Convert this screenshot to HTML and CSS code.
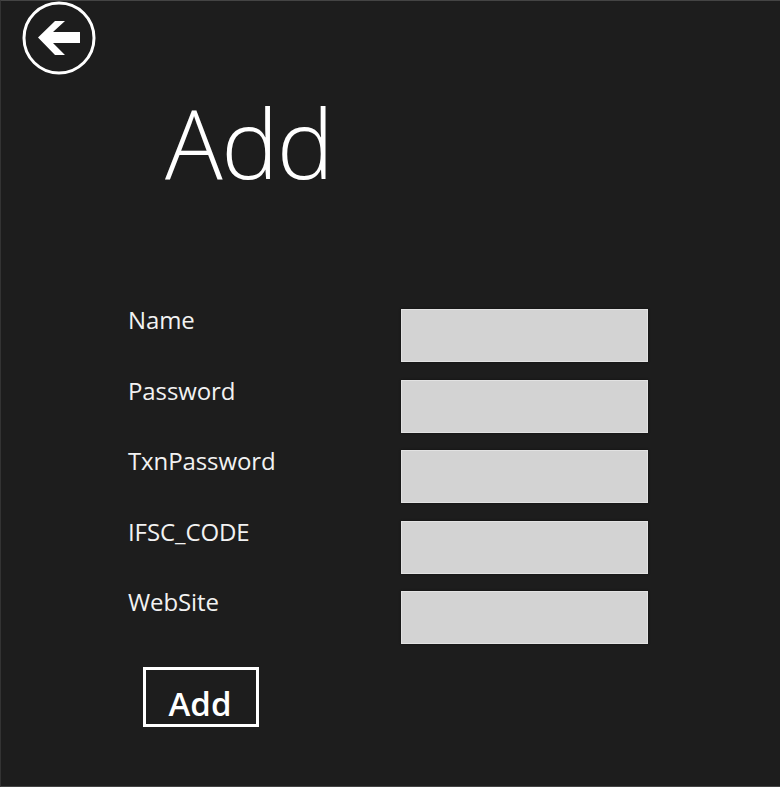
FILE: index.html
```html
<!DOCTYPE html>
<html lang="en">
<head>
  <meta charset="UTF-8">
  <meta name="viewport" content="width=device-width, initial-scale=1.0">
  <title>Add</title>
  <link rel="stylesheet" href="styles.css">
</head>
<body>
  <div class="page">
    <!-- Back button -->
    <button type="button" class="back-button" aria-label="Back">
      <svg class="back-icon" viewBox="0 0 74 74" width="74" height="74">
        <circle cx="37" cy="37" r="35" fill="none" stroke="#fff" stroke-width="3"/>
        <path d="M16 36.5 L33 20 H43 L31 31 H58 V42 H31 L43 54 H33 Z" fill="#fff"/>
      </svg>
    </button>

    <h1 class="page-title">Add</h1>

    <form class="add-form">
      <div class="form-row">
        <label for="name" class="form-label">Name</label>
        <input type="text" id="name" class="form-input">
      </div>
      <div class="form-row">
        <label for="password" class="form-label">Password</label>
        <input type="text" id="password" class="form-input">
      </div>
      <div class="form-row">
        <label for="txnPassword" class="form-label">TxnPassword</label>
        <input type="text" id="txnPassword" class="form-input">
      </div>
      <div class="form-row">
        <label for="ifscCode" class="form-label">IFSC_CODE</label>
        <input type="text" id="ifscCode" class="form-input">
      </div>
      <div class="form-row">
        <label for="website" class="form-label">WebSite</label>
        <input type="text" id="website" class="form-input">
      </div>
      <button type="submit" class="submit-button">Add</button>
    </form>
  </div>
</body>
</html>
```

FILE: styles.css
```css
* {
  margin: 0;
  padding: 0;
  box-sizing: border-box;
  font-family: "Open Sans", "Noto Sans", sans-serif;
}

html, body {
  height: 100%;
}

body {
  background-color: #1d1d1d;
  color: white;
  overflow: hidden;
}

.page {
  height: 787px;
  padding: 0 0 0 21px;
  border-top: 1px solid #444;
  border-left: 1px solid #333;
  border-bottom: 1px solid #444;
}

.back-button {
  display: block;
  width: 74px;
  height: 74px;
  background: none;
  border: none;
}

.back-icon {
  display: block;
}

.page-title {
  margin: 14px 0 0 143px;
  font-size: 96px;
  font-weight: 300;
  line-height: 106px;
  letter-spacing: -1.5px;
}

.add-form {
  margin: 112px 0 0 106px;
}

.form-row {
  display: flex;
  align-items: flex-start;
  height: 70.5px;
}

.form-label {
  width: 273px;
  padding-top: 1px;
  color: #f2f2f2;
  font-size: 24px;
  line-height: 24px;
  letter-spacing: -0.1px;
}

.form-input {
  width: 247px;
  height: 53px;
  margin-top: 2px;
  background-color: #d3d3d3;
  border: none;
  box-shadow: inset 0 0 0 1px #e2e2e2, 0 0 2px #111;
}

.submit-button {
  display: block;
  width: 116px;
  height: 60px;
  margin: 7.5px 0 0 15px;
  padding: 13px 2px 0 0;
  background: none;
  border: 3px solid white;
  color: white;
  font-size: 33px;
  line-height: 40px;
  font-weight: 600;
}
```
